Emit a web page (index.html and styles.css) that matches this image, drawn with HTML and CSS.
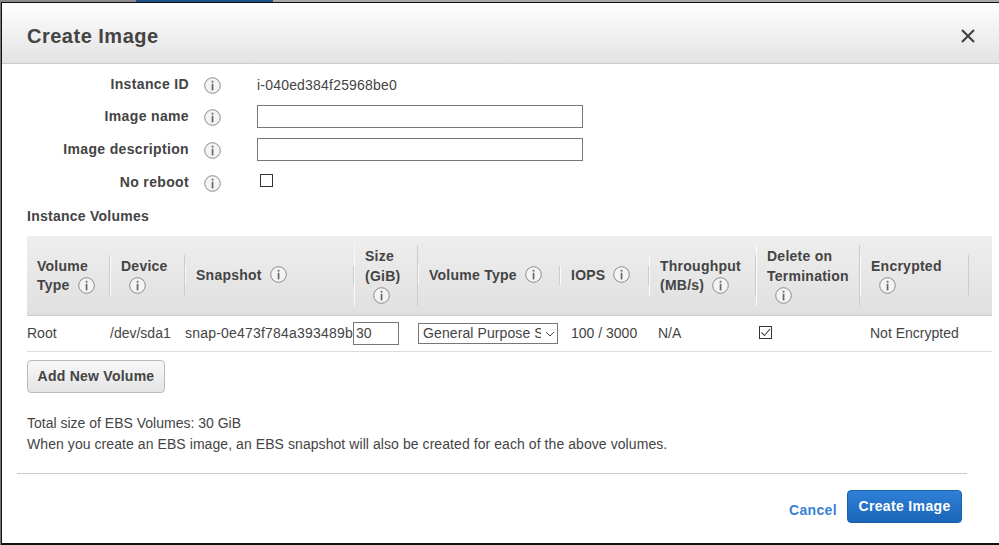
FILE: index.html
```html
<!DOCTYPE html>
<html lang="en">
<head>
  <meta charset="UTF-8">
  <title>Create Image</title>
  <link rel="stylesheet" href="styles.css">
</head>
<body>
  <svg class="defs" width="0" height="0">
    <symbol id="info" viewBox="0 0 17 17">
      <circle cx="8.5" cy="8.5" r="7.8" fill="#f4f4f4" stroke="#8a8a8a" stroke-width="1"/>
      <rect x="7.7" y="3.8" width="1.7" height="1.8" fill="#666"/>
      <rect x="7.7" y="6.8" width="1.7" height="6.6" fill="#666"/>
    </symbol>
  </svg>

  <div class="backdrop">
    <span class="strip-a"></span>
    <span class="strip-b"></span>
    <span class="strip-c"></span>
  </div>

  <div class="modal">
    <div class="modal-header">
      <h2>Create Image</h2>
      <svg class="close" width="14" height="14" viewBox="0 0 14 14">
        <path d="M1 1 L13 13 M13 1 L1 13" stroke="#444" stroke-width="2.2" fill="none"/>
      </svg>
    </div>

    <div class="modal-body">
      <div class="form-grid">
        <label>Instance ID</label>
        <svg class="info"><use href="#info"/></svg>
        <span class="value">i-040ed384f25968be0</span>

        <label>Image name</label>
        <svg class="info"><use href="#info"/></svg>
        <input type="text" class="text-input">

        <label>Image description</label>
        <svg class="info"><use href="#info"/></svg>
        <input type="text" class="text-input">

        <label>No reboot</label>
        <svg class="info"><use href="#info"/></svg>
        <span class="check check-reboot"></span>
      </div>

      <h3>Instance Volumes</h3>

      <table class="volumes">
        <colgroup>
          <col class="c1"><col class="c2"><col class="c3"><col class="c4"><col class="c5">
          <col class="c6"><col class="c7"><col class="c8"><col class="c9"><col>
        </colgroup>
        <thead>
          <tr>
            <th><div class="th-in first">Volume Type<svg class="info"><use href="#info"/></svg></div></th>
            <th><div class="th-in">Device<svg class="info"><use href="#info"/></svg></div></th>
            <th><div class="th-in single">Snapshot<svg class="info"><use href="#info"/></svg></div></th>
            <th><div class="th-in">Size (GiB)<svg class="info"><use href="#info"/></svg></div></th>
            <th><div class="th-in single">Volume Type<svg class="info"><use href="#info"/></svg></div></th>
            <th><div class="th-in single">IOPS<svg class="info"><use href="#info"/></svg></div></th>
            <th><div class="th-in">Throughput (MB/s)<svg class="info"><use href="#info"/></svg></div></th>
            <th><div class="th-in">Delete on Termination<svg class="info"><use href="#info"/></svg></div></th>
            <th><div class="th-in">Encrypted<svg class="info"><use href="#info"/></svg></div></th>
            <th></th>
          </tr>
        </thead>
        <tbody>
          <tr>
            <td>Root</td>
            <td>/dev/sda1</td>
            <td class="snap">snap-0e473f784a393489b</td>
            <td><input type="text" class="size-input" value="30"></td>
            <td>
              <div class="select-wrap">
                <select class="type-select"><option>General Purpose SSD (GP2)</option></select>
                <svg class="chevron" width="10" height="6" viewBox="0 0 10 6">
                  <path d="M1 1 L5 5 L9 1" stroke="#444" stroke-width="1" fill="none"/>
                </svg>
              </div>
            </td>
            <td class="pad-iops">100 / 3000</td>
            <td class="pad-tp">N/A</td>
            <td class="pad-del">
              <span class="check">
                <svg width="11" height="11" viewBox="0 0 11 11">
                  <path d="M1.5 5.5 L4.5 8.5 L10 2" stroke="#444" stroke-width="1.1" fill="none"/>
                </svg>
              </span>
            </td>
            <td class="pad-enc" colspan="2">Not Encrypted</td>
          </tr>
        </tbody>
      </table>

      <button class="btn-add">Add New Volume</button>

      <p class="note">Total size of EBS Volumes: 30 GiB</p>
      <p class="note note-wide">When you create an EBS image, an EBS snapshot will also be created for each of the above volumes.</p>
    </div>

    <div class="modal-footer">
      <a class="cancel">Cancel</a>
      <button class="btn-primary">Create Image</button>
    </div>
  </div>
</body>
</html>
```

FILE: styles.css
```css
* {
  box-sizing: border-box;
}

html, body {
  margin: 0;
  height: 545px;
  overflow: hidden;
}

body {
  font-family: "Liberation Sans", Arial, sans-serif;
  font-size: 14px;
  color: #444;
  background-color: #777;
}

.defs {
  position: absolute;
}

.backdrop {
  display: flex;
  height: 2px;
}

.strip-a {
  width: 136px;
  background-color: #8a8a8a;
}

.strip-b {
  width: 137px;
  background-color: #1f4f8a;
}

.strip-c {
  flex: 1;
  background-color: #a8a8a8;
}

.modal {
  margin-left: 1px;
  height: 543px;
  background-color: #fff;
  border: 2px solid #111;
  border-width: 1px 0 2px 1px;
}

.modal-header {
  display: flex;
  justify-content: space-between;
  align-items: center;
  height: 61px;
  padding: 6px 24px 0 25px;
  background: linear-gradient(to bottom, #fefefe, #e3e3e3);
  border-bottom: 1px solid #ccc;
}

.modal-header h2 {
  margin: 0;
  font-size: 20px;
  letter-spacing: 0.5px;
  color: #444;
}

.modal-body {
  padding: 4px 7px 0 25px;
}

.form-grid {
  display: grid;
  grid-template-columns: 162px 68px 326px;
  grid-template-rows: 32px 33px 33px 33px;
  align-items: center;
}

.form-grid label {
  padding-bottom: 2px;
  text-align: right;
  font-weight: bold;
  letter-spacing: 0.35px;
}

.form-grid label:first-child {
  padding-bottom: 0;
}

.form-grid .info {
  margin: 2px 0 0 15px;
}

.value {
  padding-top: 2px;
  letter-spacing: 0.2px;
}

.info {
  width: 17px;
  height: 17px;
  vertical-align: middle;
}

.text-input {
  width: 326px;
  height: 23px;
  border: 1px solid #777;
  background-color: #fff;
}

.check {
  display: inline-flex;
  align-items: center;
  justify-content: center;
  width: 13px;
  height: 13px;
  border: 1px solid #333;
  background-color: #fff;
}

.check-reboot {
  margin: 0 0 4px 3px;
}

h3 {
  margin: 9px 0 12px;
  font-size: 14px;
  line-height: 16px;
  letter-spacing: 0.25px;
  color: #444;
}

.volumes {
  width: 965px;
  table-layout: fixed;
  border-collapse: collapse;
}

.c1 { width: 83px; }
.c2 { width: 75px; }
.c3 { width: 169px; }
.c4 { width: 64px; }
.c5 { width: 142px; }
.c6 { width: 89px; }
.c7 { width: 107px; }
.c8 { width: 104px; }
.c9 { width: 109px; }

.volumes th {
  height: 79px;
  padding: 0;
  text-align: left;
  background: linear-gradient(to bottom, #eeeeee, #e0e0e0);
  border-bottom: 1px solid #ccc;
}

.th-in {
  padding: 2px 10px 0;
  line-height: 19.5px;
  font-size: 14px;
  letter-spacing: 0.25px;
  border-left: 1px solid #fafafa;
  border-right: 1px solid #ccc;
}

.th-in.first {
  border-left: none;
}

.th-in.single {
  padding-top: 0;
}

.th-in .info {
  margin: -2px 0 0 8px;
}

.volumes td {
  height: 36px;
  padding: 0;
  border-bottom: 1px solid #ddd;
  white-space: nowrap;
}

.volumes .snap {
  letter-spacing: 0.2px;
}

.size-input {
  display: block;
  width: 46px;
  height: 23px;
  margin-left: -1px;
  padding: 0 2px;
  font: inherit;
  color: #444;
  border: 1px solid #777;
}

.select-wrap {
  position: relative;
  width: 140px;
}

.type-select {
  display: block;
  width: 140px;
  height: 21px;
  padding: 0 16px 0 4px;
  font: inherit;
  letter-spacing: 0.1px;
  color: #444;
  background-color: #fff;
  border: 1px solid #777;
  border-radius: 0;
  appearance: none;
}

.chevron {
  position: absolute;
  top: 8px;
  right: 3px;
}

.pad-iops { padding-left: 11px !important; }
.pad-tp { padding-left: 9px !important; }
.pad-del { padding-left: 3px !important; }
.pad-enc { padding-left: 10px !important; }

.pad-del .check {
  margin-bottom: 3px;
}

.btn-add {
  display: block;
  width: 138px;
  height: 33px;
  margin: 8px 0 22px;
  font: bold 14px "Liberation Sans", Arial, sans-serif;
  letter-spacing: 0.25px;
  color: #444;
  background: linear-gradient(to bottom, #f8f8f8, #e4e4e4);
  border: 1px solid #bbb;
  border-radius: 4px;
}

.note {
  margin: 0 0 5px;
  line-height: 16px;
}

.note-wide {
  letter-spacing: 0.07px;
}

.modal-footer {
  display: flex;
  justify-content: flex-end;
  align-items: center;
  gap: 10px;
  margin: 21px 32px 0 15px;
  padding: 16px 5px 0 0;
  border-top: 1px solid #ccc;
}

.cancel {
  margin-top: 7px;
  font-weight: bold;
  letter-spacing: 0.35px;
  color: #3a7fd5;
}

.btn-primary {
  width: 115px;
  height: 33px;
  font: bold 14px "Liberation Sans", Arial, sans-serif;
  letter-spacing: 0.35px;
  color: #fff;
  background: linear-gradient(to bottom, #2f80d8, #1a66b8);
  border: 1px solid #1a5fa8;
  border-radius: 4px;
}
```
